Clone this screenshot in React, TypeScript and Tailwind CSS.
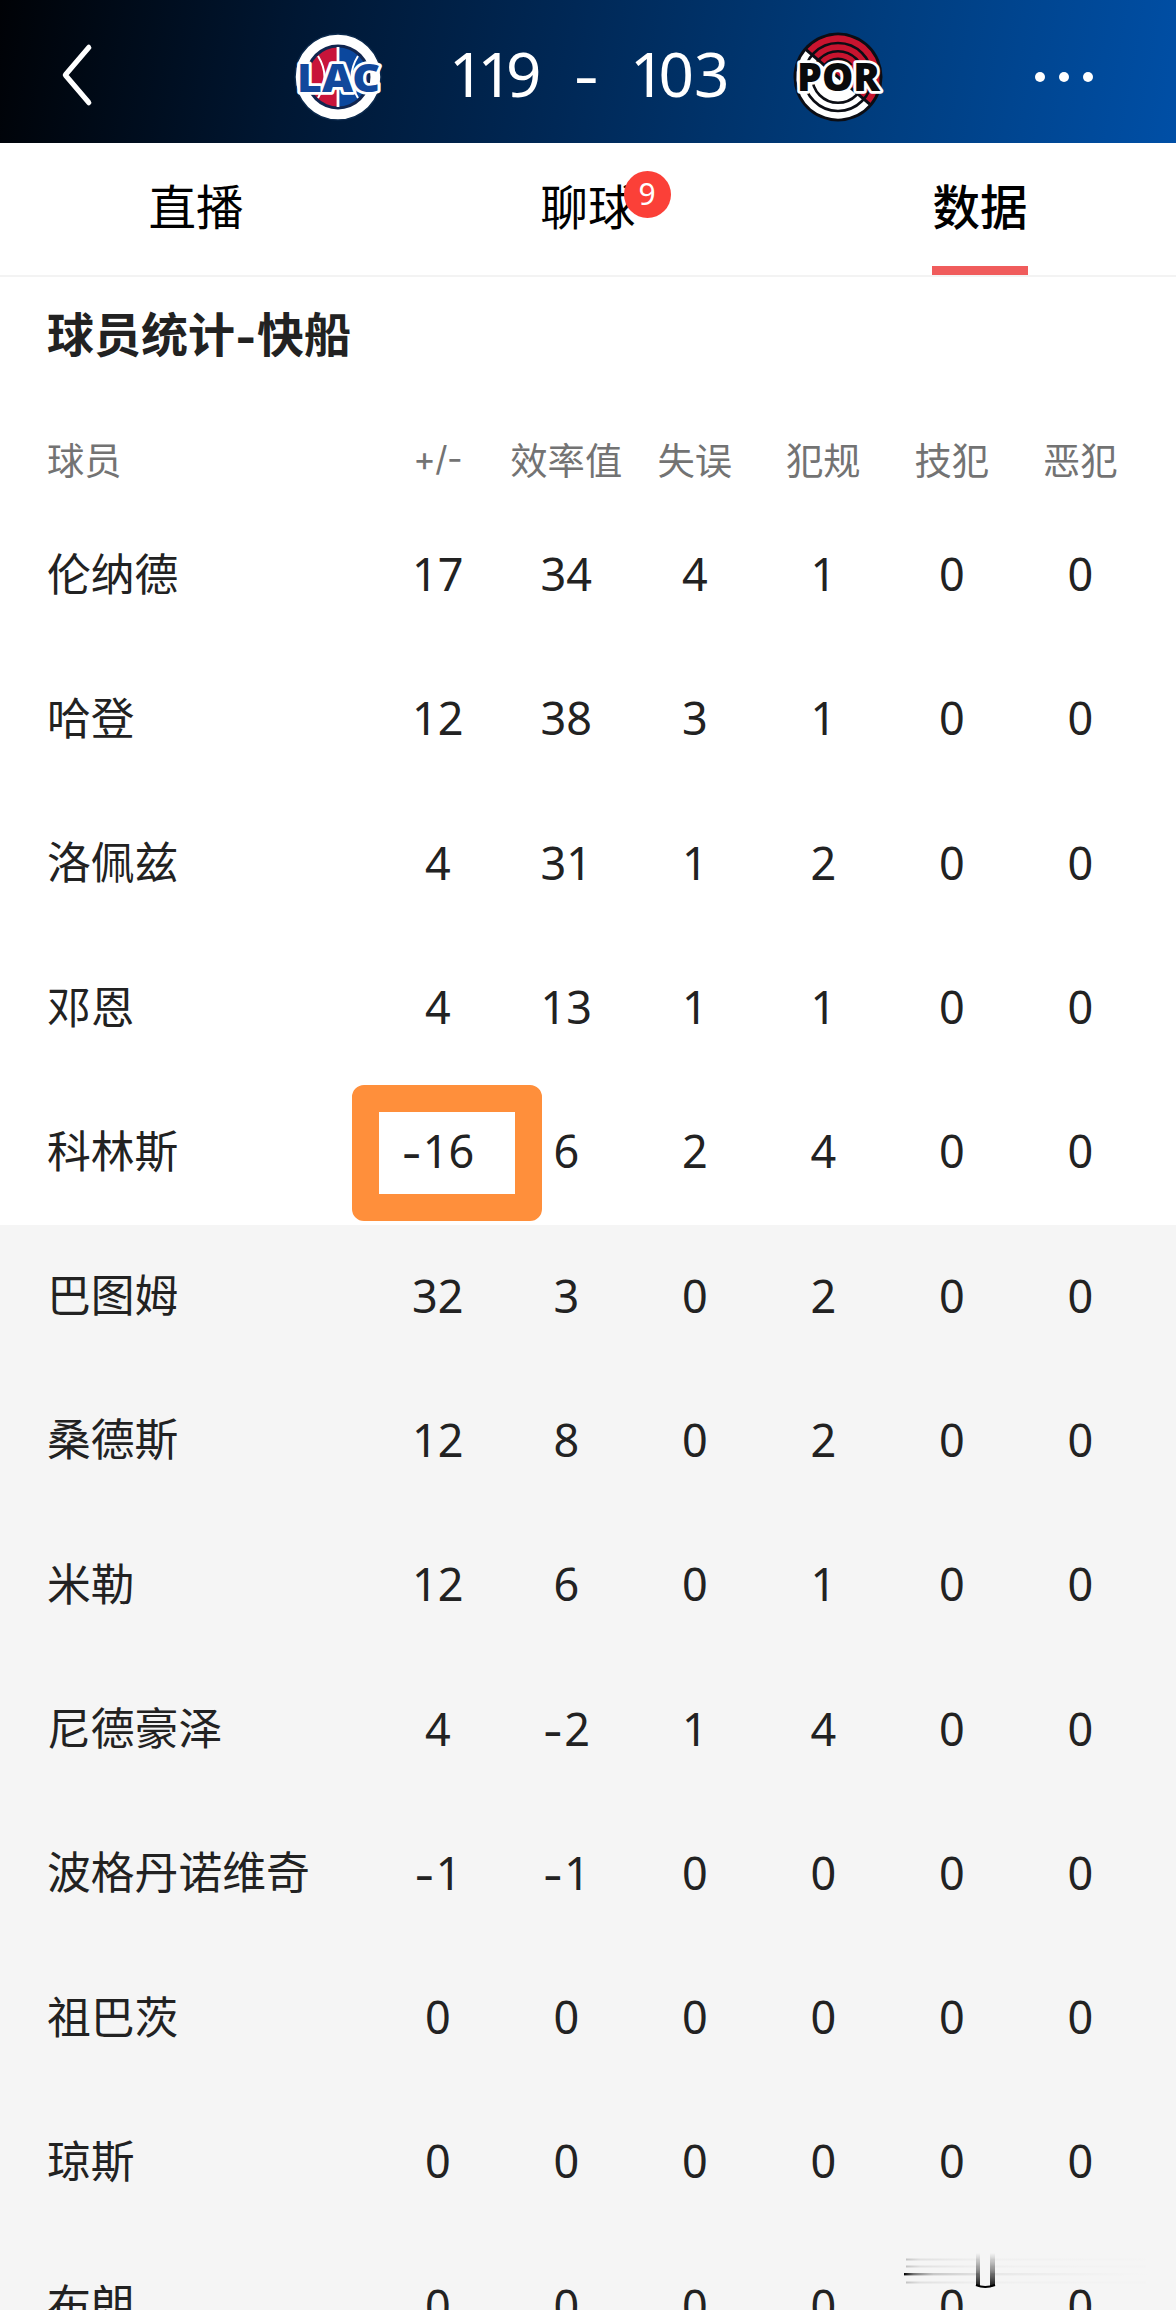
import { ChevronLeft } from 'lucide-react'
import clsx from 'clsx'

// ── Data ──────────────────────────────────────────────────────────────────────

interface Player {
  name: string
  stats: number[]
  starter?: boolean
  marked?: boolean
}

const COLUMNS = ['+/-', '效率值', '失误', '犯规', '技犯', '恶犯']

const PLAYERS: Player[] = [
  { name: '伦纳德', stats: [17, 34, 4, 1, 0, 0], starter: true },
  { name: '哈登', stats: [12, 38, 3, 1, 0, 0], starter: true },
  { name: '洛佩兹', stats: [4, 31, 1, 2, 0, 0], starter: true },
  { name: '邓恩', stats: [4, 13, 1, 1, 0, 0], starter: true },
  { name: '科林斯', stats: [-16, 6, 2, 4, 0, 0], starter: true, marked: true },
  { name: '巴图姆', stats: [32, 3, 0, 2, 0, 0] },
  { name: '桑德斯', stats: [12, 8, 0, 2, 0, 0] },
  { name: '米勒', stats: [12, 6, 0, 1, 0, 0] },
  { name: '尼德豪泽', stats: [4, -2, 1, 4, 0, 0] },
  { name: '波格丹诺维奇', stats: [-1, -1, 0, 0, 0, 0] },
  { name: '祖巴茨', stats: [0, 0, 0, 0, 0, 0] },
  { name: '琼斯', stats: [0, 0, 0, 0, 0, 0] },
  { name: '布朗', stats: [0, 0, 0, 0, 0, 0] },
]

const GRID = 'grid grid-cols-[326.5px_repeat(6,128.5px)] items-center pl-[47px]'

// ── Team logos ────────────────────────────────────────────────────────────────

function ClippersLogo() {
  return (
    <svg viewBox="-44 -44 88 88" className="size-[88px] shrink-0 overflow-visible" aria-label="LAC">
      <circle r="43" fill="#fff" stroke="#0c2a4d" strokeWidth="1.5" />
      <circle r="32.5" fill="#10254f" />
      <path d="M0 -29.5A29.5 29.5 0 0 0 0 29.5Z" fill="#c8143a" />
      <path d="M0 -29.5A29.5 29.5 0 0 1 0 29.5Z" fill="#0b479d" />
      <g fill="none" stroke="#fff" strokeWidth="2">
        <path d="M0 -30V30" strokeWidth="2.8" />
        <path d="M-20 -21Q-7 0 -20 21M20 -21Q7 0 20 21" />
      </g>
      <text
        x="0.5"
        y="14.5"
        textAnchor="middle"
        textLength="83"
        lengthAdjust="spacingAndGlyphs"
        className="font-['Noto_Sans',sans-serif] text-[38px] font-black"
        fill="#12489c"
        stroke="#fff"
        strokeWidth="5.5"
        strokeLinejoin="round"
        paintOrder="stroke"
      >
        LAC
      </text>
    </svg>
  )
}

function BlazersLogo() {
  return (
    <svg viewBox="-44 -44 88 88" className="size-[88px] shrink-0 overflow-visible" aria-label="POR">
      <circle r="44.5" fill="#0b0d14" />
      <path d="M-31.7 -27A41.64 41.64 0 0 1 31.7 27Z" fill="#c8142f" />
      <path d="M-31.7 -27A41.64 41.64 0 0 0 31.7 27Z" fill="#fff" />
      <g fill="none" stroke="#0b0d14" strokeWidth="2.6">
        <circle r="34" />
        <circle r="25.8" />
        <path d="M-13.5 -12A18 18 0 0 1 13.5 -12" />
        <path d="M-32 -27.3L32 27.3" strokeWidth="3" />
      </g>
      <text
        x="0.5"
        y="14"
        textAnchor="middle"
        textLength="83"
        lengthAdjust="spacingAndGlyphs"
        className="font-['Noto_Sans',sans-serif] text-[38px] font-black"
        fill="#0a0a0c"
        stroke="#fff"
        strokeWidth="5.5"
        strokeLinejoin="round"
        paintOrder="stroke"
      >
        POR
      </text>
    </svg>
  )
}

// ── Header ────────────────────────────────────────────────────────────────────

function Header() {
  return (
    <header className="flex h-[143px] items-center bg-[linear-gradient(100deg,#000206_0%,#001733_25%,#002856_48%,#003d7e_74%,#004fa6_100%)] text-white">
      <div className="flex w-[294px] items-center pt-[6px] pl-[30px]">
        <ChevronLeft className="h-[110px] w-[94px]" strokeWidth={1.25} preserveAspectRatio="none" />
      </div>
      <div className="flex pt-[10px]">
        <ClippersLogo />
      </div>
      <div className="flex w-[412px] items-center pt-[2px] pl-[67px] text-[62px] leading-[80px]">
        <span className="w-[124px]">
          <span className="tracking-[-7px]">11</span>9
        </span>
        <span className="w-[57px] pt-[10px] font-['Inter',sans-serif] text-[58px]">-</span>
        <span>
          <span className="tracking-[-7px]">1</span>03
        </span>
      </div>
      <div className="flex pt-[10px]">
        <BlazersLogo />
      </div>
      <div className="ml-[153px] flex gap-[14px] pt-[10px]">
        <i className="size-[10px] rounded-full bg-white" />
        <i className="size-[10px] rounded-full bg-white" />
        <i className="size-[10px] rounded-full bg-white" />
      </div>
    </header>
  )
}

// ── Tabs ──────────────────────────────────────────────────────────────────────

function Tabs() {
  return (
    <nav className="grid h-[134px] grid-cols-3 border-b-2 border-[#f3f3f3] font-['Noto_Sans_CJK_SC',sans-serif] text-[47.5px] leading-[60px] text-black">
      <div className="flex justify-center pt-[32px]">直播</div>
      <div className="flex justify-center pt-[32px]">
        <span className="relative h-[60px]">
          聊球
          <span className="absolute top-[-4px] left-[83px] flex size-[47px] items-center justify-center rounded-full bg-[#fb4038] pb-px font-['Noto_Sans',sans-serif] text-[30px] leading-none text-white">
            9
          </span>
        </span>
      </div>
      <div className="flex flex-col items-center justify-between pt-[32px] font-medium">
        数据
        <span className="h-[9px] w-24 bg-[#f05c5c]" />
      </div>
    </nav>
  )
}

// ── Stats table ───────────────────────────────────────────────────────────────

function Stat({ value }: { value: number }) {
  return (
    <span className="flex">
      {value < 0 && <span className="mr-px pt-[3px] font-['Inter',sans-serif]">-</span>}
      {Math.abs(value)}
    </span>
  )
}

function PlayerRow({ player }: { player: Player }) {
  return (
    <div className={clsx(GRID, 'h-[144.3px] shrink-0 pb-[3px] text-[45px] leading-[60px]', !player.starter && 'bg-[#f5f5f5]')}>
      <span className="pb-[5px] font-['Noto_Sans_CJK_SC',sans-serif] text-[43.8px]">{player.name}</span>
      {player.stats.map((value, i) => (
        <span key={COLUMNS[i]} className="relative flex h-[60px] justify-center">
          <Stat value={value} />
          {player.marked && i === 0 && (
            <span className="absolute top-[-36px] left-[-22px] h-[136px] w-[190px] rounded-xl border-[27px] border-[#ff8f3b]" />
          )}
        </span>
      ))}
    </div>
  )
}

function StatsTable() {
  return (
    <section className="text-[#222]">
      <h2 className="flex h-[143px] pt-[25px] pl-[47px] font-['Noto_Sans_CJK_SC',sans-serif] text-[47px] leading-[60px] font-bold">
        球员统计
        <span className="w-[22px] pt-[5px] font-['Inter',sans-serif] text-[46px]">-</span>
        快船
      </h2>
      <div className={clsx(GRID, "h-[83.5px] pb-[6px] font-['Noto_Sans_CJK_SC',sans-serif] text-[37.3px] leading-[50px] text-[#737373]")}>
        <span>球员</span>
        {COLUMNS.map(label => (
          <span key={label} className={clsx('text-center', label === '+/-' && "font-['Inter',sans-serif] text-[34px] tracking-[-0.5px]")}>
            {label}
          </span>
        ))}
      </div>
      {PLAYERS.map(player => (
        <PlayerRow key={player.name} player={player} />
      ))}
    </section>
  )
}

// ── Corner mark ───────────────────────────────────────────────────────────────

function CornerMark() {
  return (
    <svg viewBox="0 0 250 44" className="absolute top-[2248px] left-[902px] h-[44px] w-[250px]" aria-hidden>
      <defs>
        <linearGradient id="dark" x1="0" x2="1" y1="0" y2="0">
          <stop offset="0" stopColor="#000" />
          <stop offset="0.04" stopColor="#555" stopOpacity="0.8" />
          <stop offset="0.12" stopColor="#999" stopOpacity="0.5" />
          <stop offset="0.35" stopColor="#bbb" stopOpacity="0.25" />
          <stop offset="1" stopColor="#ddd" stopOpacity="0" />
        </linearGradient>
        <linearGradient id="faint" x1="0" x2="1" y1="0" y2="0">
          <stop offset="0" stopColor="#999" stopOpacity="0.55" />
          <stop offset="0.06" stopColor="#bbb" stopOpacity="0.35" />
          <stop offset="0.3" stopColor="#ccc" stopOpacity="0.15" />
          <stop offset="1" stopColor="#ddd" stopOpacity="0.05" />
        </linearGradient>
        <linearGradient id="post" x1="0" x2="0" y1="0" y2="1">
          <stop offset="0" stopColor="#000" stopOpacity="0" />
          <stop offset="0.5" stopColor="#000" stopOpacity="0.4" />
          <stop offset="1" stopColor="#000" stopOpacity="0.9" />
        </linearGradient>
      </defs>
      <rect x="2" y="25" width="246" height="2.4" fill="url(#dark)" />
      <rect x="4" y="10.5" width="240" height="2" fill="url(#faint)" />
      <rect x="4" y="17.5" width="240" height="2" fill="url(#faint)" />
      <rect x="4" y="33.5" width="240" height="2" fill="url(#faint)" />
      <rect x="77" y="5" width="12" height="34" fill="#f5f5f5" />
      <rect x="74" y="5" width="4" height="33" fill="url(#post)" />
      <rect x="88" y="5" width="5" height="33" fill="url(#post)" />
      <path d="M74 37Q83 41 93 37" fill="none" stroke="#000" strokeWidth="2" />
    </svg>
  )
}

export default function App() {
  return (
    <main className="relative h-[2312px] w-[1176px] overflow-hidden border-b-2 border-white bg-white font-['Noto_Sans','Noto_Sans_CJK_SC',sans-serif]">
      <Header />
      <Tabs />
      <StatsTable />
      <CornerMark />
    </main>
  )
}
